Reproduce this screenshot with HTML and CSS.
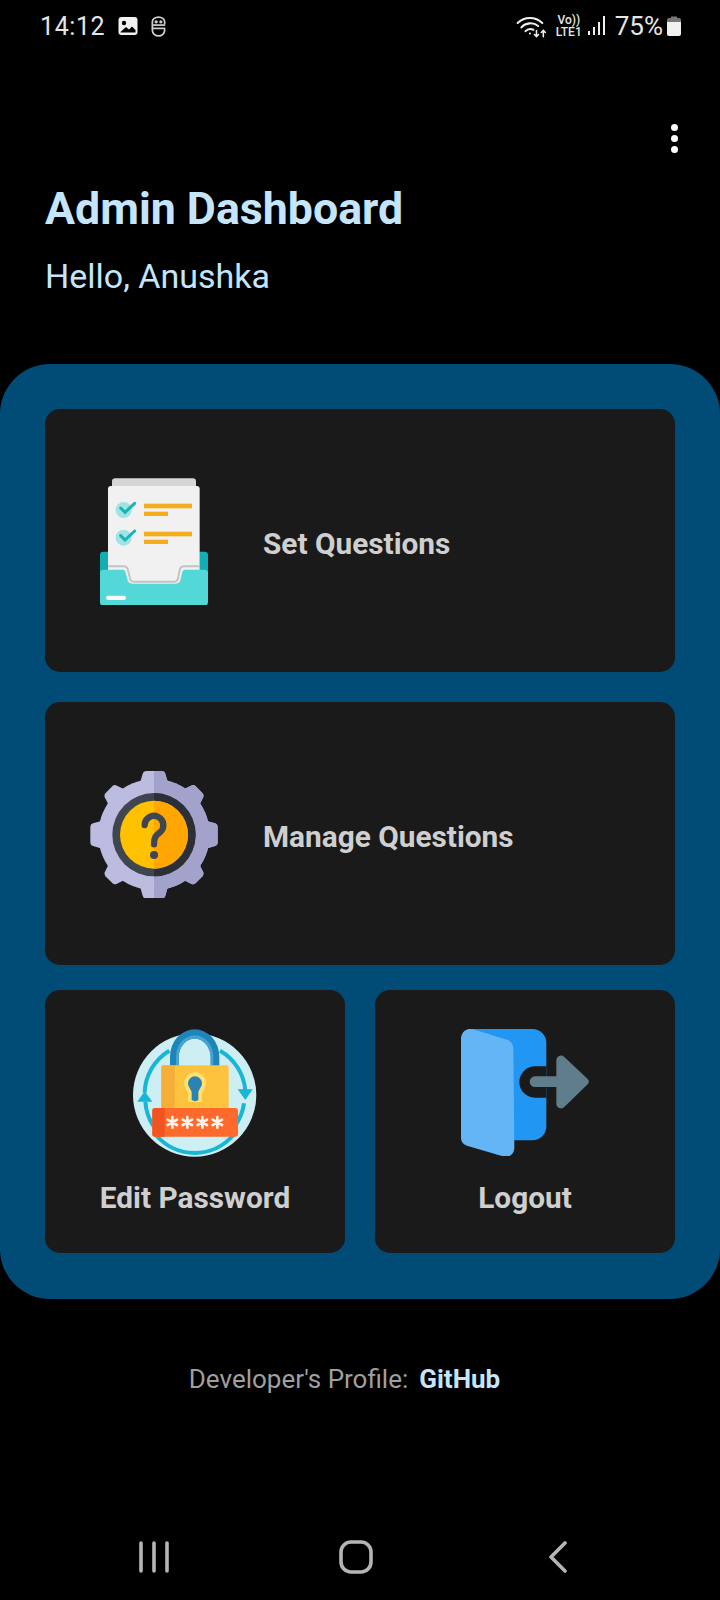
FILE: index.html
```html
<!DOCTYPE html>
<html lang="en">
<head>
    <meta charset="UTF-8">
    <meta name="viewport" content="width=device-width, initial-scale=1.0">
    <title>Admin Dashboard</title>
    <link rel="stylesheet" href="styles.css">
</head>
<body>

    <!-- Status bar -->
    <div class="status-bar">
        <span class="clock">14:12</span>
        <svg class="status-pic" viewBox="0 0 20 20">
            <rect x="0.5" y="1" width="19" height="18" rx="3" fill="#f2f2f2"/>
            <circle cx="6" cy="7" r="2.2" fill="#000"/>
            <path d="M2.5 16 L8 11 L11 13.5 L14 10.5 L17.5 14 V16.5 H2.5 Z" fill="#000"/>
        </svg>
        <svg class="status-s" viewBox="0 0 18 22" fill="none" stroke="#d0d0d0" stroke-width="1.8">
            <path d="M2.5 9 V6 A6.5 5 0 0 1 15.5 6 V9"/>
            <path d="M2 9.5 H16"/>
            <path d="M2 13 H16"/>
            <path d="M2.5 9 V15 A6.5 6 0 0 0 15.5 15 V13"/>
            <circle cx="6.5" cy="6" r="0.8" fill="#d0d0d0"/>
            <circle cx="11.5" cy="6" r="0.8" fill="#d0d0d0"/>
        </svg>
        <div class="status-right">
            <svg class="status-wifi" viewBox="105 40 95 70" fill="none" stroke="#f0f0f0" stroke-width="6" stroke-linecap="round">
                <path d="M112 66 A52 52 0 0 1 184 66"/>
                <path d="M123 79 A36 36 0 0 1 172 75"/>
                <path d="M135 90 A20 20 0 0 1 158 86"/>
                <circle cx="148" cy="97" r="3" fill="#f0f0f0" stroke="none"/>
                <path d="M167 88 V106 M161 100 L167 106 L173 100" stroke-width="4.5"/>
                <path d="M187 106 V88 M181 94 L187 88 L193 94" stroke-width="4.5"/>
            </svg>
            <div class="volte">
                <span>Vo))</span>
                <span>LTE1</span>
            </div>
            <svg class="status-signal" viewBox="0 0 18 20" fill="#f0f0f0">
                <rect x="0" y="15" width="2" height="4"/>
                <rect x="5" y="11" width="2" height="8"/>
                <rect x="10" y="6" width="2" height="13"/>
                <rect x="15" y="0" width="2" height="19"/>
            </svg>
            <span class="battery-text">75%</span>
            <svg class="status-battery" viewBox="0 0 14 20">
                <path d="M4 0.5 H10 V2 H12 A2 2 0 0 1 14 4 V6 H0 V4 A2 2 0 0 1 2 2 H4 Z" fill="#777"/>
                <path d="M0 6 H14 V18 A2 2 0 0 1 12 20 H2 A2 2 0 0 1 0 18 Z" fill="#f0f0f0"/>
            </svg>
        </div>
    </div>

    <!-- Menu dots -->
    <div class="top-row">
        <div class="menu-dots">
            <span></span>
            <span></span>
            <span></span>
        </div>
    </div>

    <div class="header">
        <h1>Admin Dashboard</h1>
        <p>Hello, Anushka</p>
    </div>

    <div class="panel">
        <div class="card card-wide">
            <svg class="card-icon" viewBox="30 48 384 384">
                <path d="M60 282 A10 10 0 0 1 70 272 H374 A10 10 0 0 1 384 282 V340 H60 Z" fill="#12aeb4"/>
                <path d="M84 272 H360 V328 H84 Z" fill="#0a8f96"/>
                <path d="M96 62 A10 10 0 0 1 106 52 H338 A10 10 0 0 1 348 62 V90 H96 Z" fill="#d6d6d6"/>
                <path d="M84 84 A9 9 0 0 1 93 75 H350 A9 9 0 0 1 359 84 V372 H84 Z" fill="#f1f1f1"/>
                <circle cx="131" cy="147" r="24" fill="#9fe3e3"/>
                <circle cx="131" cy="230" r="24" fill="#9fe3e3"/>
                <path d="M122 141 L135 154 L164 127" fill="none" stroke="#16b3b9" stroke-width="9" stroke-linecap="round"/>
                <path d="M122 224 L135 237 L164 210" fill="none" stroke="#16b3b9" stroke-width="9" stroke-linecap="round"/>
                <rect x="192" y="128" width="144" height="14" fill="#f5ad1d"/>
                <rect x="192" y="152" width="72" height="13" fill="#f5ad1d"/>
                <rect x="192" y="212" width="144" height="14" fill="#f5ad1d"/>
                <rect x="192" y="236" width="72" height="13" fill="#f5ad1d"/>
                <path d="M84 316 H130 A14 14 0 0 1 144 328 L150 352 A12 12 0 0 0 160 362 H284 A12 12 0 0 0 294 352 L299 328 A14 14 0 0 1 313 316 H359" fill="none" stroke="#c4c4c4" stroke-width="6"/>
                <path d="M60 338 A10 10 0 0 1 70 326 H128 A8 8 0 0 1 136 332 L142 354 A16 16 0 0 0 158 368 H286 A16 16 0 0 0 302 354 L307 332 A8 8 0 0 1 315 326 H374 A10 10 0 0 1 384 338 V424 A10 10 0 0 1 374 434 H70 A10 10 0 0 1 60 424 Z" fill="#53d8d8"/>
                <rect x="78" y="404" width="60" height="13" rx="6.5" fill="#fafafa"/>
            </svg>
            <span class="card-label">Set Questions</span>
        </div>

        <div class="card card-wide card-second">
            <svg class="card-icon" viewBox="30 27 384 384">
                <defs>
                    <g id="gearShape">
                        <circle cx="222" cy="221" r="167"/>
                        <path id="toothMain" d="M180 66 L188 38 Q190 30 198 30 H246 Q254 30 256 38 L264 66 Z"/>
                        <use href="#toothMain" transform="rotate(90 222 221)"/>
                        <use href="#toothMain" transform="rotate(180 222 221)"/>
                        <use href="#toothMain" transform="rotate(270 222 221)"/>
                        <path d="M186 70 L197 37 Q200 30 207 30 H237 Q244 30 247 37 L258 70 Z" transform="rotate(45 222 221)"/>
                        <path d="M186 70 L197 37 Q200 30 207 30 H237 Q244 30 247 37 L258 70 Z" transform="rotate(135 222 221)"/>
                        <path d="M186 70 L197 37 Q200 30 207 30 H237 Q244 30 247 37 L258 70 Z" transform="rotate(225 222 221)"/>
                        <path d="M186 70 L197 37 Q200 30 207 30 H237 Q244 30 247 37 L258 70 Z" transform="rotate(315 222 221)"/>
                    </g>
                    <clipPath id="gearRight">
                        <rect x="222" y="0" width="240" height="450"/>
                    </clipPath>
                </defs>
                <use href="#gearShape" fill="#bcbbe0"/>
                <use href="#gearShape" fill="#a3a2cb" clip-path="url(#gearRight)"/>
                <circle cx="222" cy="221" r="125" fill="#3f4650"/>
                <circle cx="222" cy="221" r="125" fill="#2c3036" clip-path="url(#gearRight)"/>
                <circle cx="222" cy="221" r="102" fill="#ffc100"/>
                <circle cx="222" cy="221" r="102" fill="#ffa600" clip-path="url(#gearRight)"/>
                <path d="M194 192 A28 28 0 1 1 240 214 C228 222 222 228 222 250" fill="none" stroke="#3f4650" stroke-width="19" stroke-linecap="round"/>
                <circle cx="222" cy="282" r="12" fill="#3f4650"/>
            </svg>
            <span class="card-label">Manage Questions</span>
        </div>

        <div class="card-row">
            <div class="card card-half">
                <svg class="card-icon card-icon-lock" viewBox="33 24 384 384">
                    <circle cx="224" cy="225" r="185" fill="#cdeef3"/>
                    <path d="M150 150 V110 A74 82 0 0 1 298 110 V150 H272 V112 A48 56 0 0 0 176 112 V150 Z" fill="#1f84b8"/>
                    <path d="M176 150 V112 A48 56 0 0 1 272 112 V150 H280 V110 A56 64 0 0 0 168 110 V150 Z" fill="#46a2cf"/>
                    <g fill="none" stroke="#17b5d6" stroke-width="12">
                        <path d="M74 218 A152 152 0 0 1 148 92"/>
                        <path d="M300 92 A152 152 0 0 1 376 212"/>
                        <path d="M372 250 A152 152 0 0 1 345 318"/>
                        <path d="M340 345 A152 152 0 0 1 108 345"/>
                        <path d="M76 245 A152 152 0 0 0 100 318"/>
                    </g>
                    <path d="M52 245 L74 214 L97 245 Z" fill="#17b5d6"/>
                    <path d="M353 208 L398 208 L376 240 Z" fill="#17b5d6"/>
                    <rect x="124" y="136" width="202" height="140" rx="5" fill="#fdc23e"/>
                    <path d="M129 136 H164 V276 H129 A5 5 0 0 1 124 271 V141 A5 5 0 0 1 129 136 Z" fill="#f5ae38"/>
                    <path d="M192 190 A33 33 0 0 1 258 190 C258 206 246 214 246 226 V246 H204 V226 C204 214 192 206 192 190 Z" fill="#ffe071"/>
                    <path d="M204 190 A21 21 0 0 1 246 190 C246 202 235 208 235 220 V240 Q225 247 215 240 V220 C215 208 204 202 204 190 Z" fill="#2a83b3"/>
                    <rect x="97" y="264" width="257" height="86" rx="8" fill="#fd6a2c"/>
                    <path d="M105 264 H134 V350 H105 A8 8 0 0 1 97 342 V272 A8 8 0 0 1 105 264 Z" fill="#f35321"/>
                    <g stroke="#fff3ee" stroke-width="8" stroke-linecap="round">
                        <path d="M157 291 V323 M143 299 L171 315 M143 315 L171 299"/>
                        <path d="M202 291 V323 M188 299 L216 315 M188 315 L216 299"/>
                        <path d="M247 291 V323 M233 299 L261 315 M233 315 L261 299"/>
                        <path d="M292 291 V323 M278 299 L306 315 M278 315 L306 299"/>
                    </g>
                </svg>
                <span class="card-label">Edit Password</span>
            </div>
            <div class="card card-half">
                <svg class="card-icon" viewBox="48 39 384 384">
                    <path d="M70 42 H262 A42 42 0 0 1 304 84 V334 A42 42 0 0 1 262 376 H190 Z" fill="#2196f3"/>
                    <path d="M304 154 H270 A47 47 0 0 0 270 248 H304 Z" fill="#1a1a1a"/>
                    <path d="M270 184 H334 V136 A14 14 0 0 1 358 126 L428 192 A12 12 0 0 1 428 208 L358 276 A14 14 0 0 1 334 266 V216 H270 A16 16 0 0 1 270 184 Z" fill="#607d8b"/>
                    <path d="M48 70 A28 28 0 0 1 84 43 L186 74 A26 26 0 0 1 205 100 L208 400 A26 26 0 0 1 174 424 L66 392 A26 26 0 0 1 48 366 Z" fill="#64b5f6"/>
                </svg>
                <span class="card-label">Logout</span>
            </div>
        </div>
    </div>

    <div class="footer">
        <span>Developer's Profile:</span>
        <a href="#">GitHub</a>
    </div>

    <!-- Navigation bar -->
    <div class="nav-bar">
        <div class="nav-item">
            <svg class="nav-recent" viewBox="0 0 30 32" stroke="#b5b5b5" stroke-width="3.6" stroke-linecap="round">
                <path d="M2 2 V30 M15 2 V30 M28 2 V30"/>
            </svg>
        </div>
        <div class="nav-item">
            <svg class="nav-home" viewBox="0 0 34 34" fill="none" stroke="#b5b5b5" stroke-width="3.6">
                <rect x="2" y="2" width="30" height="30" rx="10"/>
            </svg>
        </div>
        <div class="nav-item">
            <svg class="nav-back" viewBox="0 0 20 32" fill="none" stroke="#b5b5b5" stroke-width="3.6" stroke-linecap="round" stroke-linejoin="round">
                <path d="M17 2 L3 16 L17 30"/>
            </svg>
        </div>
    </div>

</body>
</html>
```

FILE: styles.css
```css
* {
    box-sizing: border-box;
}

body {
    font-family: 'Roboto', 'Liberation Sans', sans-serif;
    background-color: #000;
    margin: 0;
    padding: 0;
    width: 720px;
    height: 1600px;
    overflow: hidden;
    display: flex;
    flex-direction: column;
}

.status-bar {
    display: flex;
    align-items: center;
    height: 52px;
    padding: 0 39px 0 40px;
    color: #e6e6e6;
}

.clock {
    font-size: 25px;
    letter-spacing: 0.6px;
}

.status-pic {
    width: 20px;
    height: 20px;
    margin-left: 13px;
}

.status-s {
    width: 17px;
    height: 21px;
    margin-left: 12px;
}

.status-right {
    display: flex;
    align-items: center;
    margin-left: auto;
}

.status-wifi {
    width: 33px;
    height: 24px;
}

.volte {
    display: flex;
    flex-direction: column;
    align-items: center;
    font-size: 12px;
    font-weight: 500;
    line-height: 12px;
    margin-left: 8px;
}

.status-signal {
    width: 18px;
    height: 20px;
    margin-left: 6px;
}

.battery-text {
    font-size: 26px;
    margin-left: 9px;
}

.status-battery {
    width: 14px;
    height: 20px;
    margin-left: 4px;
}

.top-row {
    display: flex;
    justify-content: flex-end;
    padding: 72px 42px 0 0;
}

.menu-dots {
    display: flex;
    flex-direction: column;
    gap: 4px;
}

.menu-dots span {
    width: 7px;
    height: 7px;
    border-radius: 50%;
    background-color: #fff;
}

.header {
    padding: 0 45px;
    color: #c5e5fd;
    margin-top: 31px;
}

.header h1 {
    font-size: 44.7px;
    font-weight: 700;
    line-height: 50px;
    margin: 0;
}

.header p {
    font-size: 34px;
    line-height: 40px;
    margin: 22px 0 0;
}

.panel {
    margin-top: 68px;
    height: 935px;
    padding: 45px;
    background-color: #014c77;
    border-radius: 50px;
}

.card {
    background-color: #1a1a1a;
    border-radius: 15px;
    display: flex;
    align-items: center;
}

.card-wide {
    height: 263px;
    padding-left: 45px;
    gap: 45px;
}

.card-wide .card-label {
    margin-top: 5px;
}

.card-second {
    margin-top: 30px;
}

.card-row {
    display: flex;
    gap: 30px;
    margin-top: 25px;
}

.card-half {
    flex: 1;
    height: 263px;
    flex-direction: column;
    padding-top: 38px;
}

.card-icon {
    width: 128px;
    height: 128px;
    flex-shrink: 0;
}

.card-icon-lock {
    overflow: visible;
}

.card-label {
    font-size: 29.8px;
    font-weight: 700;
    color: #cfcfcf;
}

.card-half .card-label {
    margin-top: 24px;
}

.footer {
    display: flex;
    justify-content: center;
    gap: 11px;
    margin-top: 65px;
    padding-right: 31px;
    font-size: 26px;
    color: #9f9f9f;
}

.footer a {
    font-weight: 700;
    color: #c5e5fd;
    text-decoration: none;
}

.nav-bar {
    display: flex;
    justify-content: center;
    margin-top: auto;
    height: 62px;
    padding-right: 8px;
}

.nav-item {
    width: 202px;
    height: 38px;
    display: flex;
    justify-content: center;
    align-items: center;
}

.nav-recent {
    width: 30px;
    height: 32px;
}

.nav-home {
    width: 34px;
    height: 34px;
}

.nav-back {
    width: 20px;
    height: 32px;
}
```
